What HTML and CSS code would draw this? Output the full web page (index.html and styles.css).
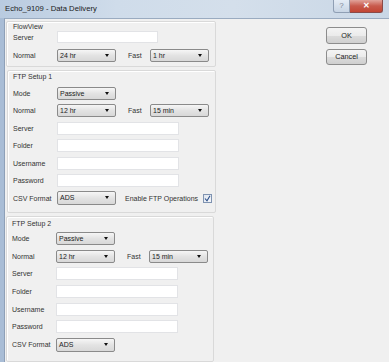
FILE: index.html
```html
<!DOCTYPE html>
<html>
  <head>
    <title>Echo_9109 - Data Delivery</title>
    <link rel="stylesheet" href="styles.css">
  </head>
  <body>
    <div class="dialog">
      <div class="dialog-title">
        <span class="dialog-title-text">Echo_9109 - Data Delivery</span>
        <div class="caption-buttons">
          <div class="caption-help">?</div>
          <div class="caption-close">&#x2715;</div>
        </div>
      </div>
      <div class="dialog-frame">
        <div class="dialog-client">
          <div class="groups">

            <div class="group group-flowview">
              <div class="group-label">FlowView</div>
              <div class="row row-first">
                <span class="row-label">Server</span>
                <div class="textbox textbox-short"></div>
              </div>
              <div class="row row-normal">
                <span class="row-label">Normal</span>
                <div class="combo">24 hr</div>
                <span class="fast-label">Fast</span>
                <div class="combo">1 hr</div>
              </div>
            </div>

            <div class="group group-ftp1">
              <div class="group-label">FTP Setup 1</div>
              <div class="row">
                <span class="row-label">Mode</span>
                <div class="combo">Passive</div>
              </div>
              <div class="row">
                <span class="row-label">Normal</span>
                <div class="combo">12 hr</div>
                <span class="fast-label">Fast</span>
                <div class="combo">15 min</div>
              </div>
              <div class="row">
                <span class="row-label">Server</span>
                <div class="textbox"></div>
              </div>
              <div class="row">
                <span class="row-label">Folder</span>
                <div class="textbox"></div>
              </div>
              <div class="row">
                <span class="row-label">Username</span>
                <div class="textbox"></div>
              </div>
              <div class="row">
                <span class="row-label">Password</span>
                <div class="textbox"></div>
              </div>
              <div class="row">
                <span class="row-label">CSV Format</span>
                <div class="combo combo-tall">ADS</div>
                <span class="enable-label">Enable FTP Operations</span>
                <div class="checkbox">
                  <svg width="7" height="7" viewBox="0 0 7 7"><path d="M1 3.5 L3 5.8 L6 0.8" fill="none" stroke="#2b4f8a" stroke-width="1.1"/></svg>
                </div>
              </div>
            </div>

            <div class="group group-ftp2">
              <div class="group-label">FTP Setup 2</div>
              <div class="row">
                <span class="row-label">Mode</span>
                <div class="combo">Passive</div>
              </div>
              <div class="row">
                <span class="row-label">Normal</span>
                <div class="combo">12 hr</div>
                <span class="fast-label">Fast</span>
                <div class="combo">15 min</div>
              </div>
              <div class="row">
                <span class="row-label">Server</span>
                <div class="textbox"></div>
              </div>
              <div class="row">
                <span class="row-label">Folder</span>
                <div class="textbox"></div>
              </div>
              <div class="row">
                <span class="row-label">Username</span>
                <div class="textbox"></div>
              </div>
              <div class="row">
                <span class="row-label">Password</span>
                <div class="textbox"></div>
              </div>
              <div class="row">
                <span class="row-label">CSV Format</span>
                <div class="combo combo-tall">ADS</div>
              </div>
            </div>

          </div>
          <div class="buttons">
            <div class="push-button">OK</div>
            <div class="push-button push-cancel">Cancel</div>
          </div>
        </div>
      </div>
    </div>
  </body>
</html>
```

FILE: styles.css
```css
body {
  margin: 0;
  font-family: "Liberation Sans", Arial, sans-serif;
  font-size: 7px;
  color: #2a2a2a;
  background: #f0f0f0;
}

.dialog {
  width: 389px;
  height: 362px;
  overflow: hidden;
  display: flex;
  flex-direction: column;
}

.dialog-title {
  height: 18px;
  flex: none;
  display: flex;
  align-items: flex-start;
  justify-content: space-between;
  background: linear-gradient(90deg, #b9cbe0 0%, #cfdcea 30%, #d4dfeb 60%, #c9d7e6 100%);
}

.dialog-title-text {
  font-size: 7.7px;
  color: #1a1a1a;
  padding-left: 5px;
  line-height: 18px;
}

.caption-buttons {
  display: flex;
  margin-right: 6px;
}

.caption-help {
  width: 17px;
  height: 13px;
  box-sizing: border-box;
  border: 1px solid #8f9fb4;
  border-top: none;
  border-radius: 0 0 0 3px;
  background: linear-gradient(#e4ecf5, #c8d5e4);
  color: #7b8796;
  font-size: 8px;
  text-align: center;
  line-height: 12px;
}

.caption-close {
  width: 33px;
  height: 13px;
  box-sizing: border-box;
  border: 1px solid #8a4a48;
  border-top: none;
  border-left: none;
  border-radius: 0 0 3px 0;
  background: linear-gradient(#e1a39a, #c85a4c 50%, #c24534);
  color: #fff;
  font-size: 8px;
  font-weight: bold;
  text-align: center;
  line-height: 12px;
}

.dialog-frame {
  flex: 1;
  display: flex;
  border-left: 4px solid #a9bdd6;
}

.dialog-client {
  flex: 1;
  display: flex;
  border-left: 1px solid #8ea0b8;
  border-top: 1px solid #9aabc0;
  background: #f0f0f0;
}

.groups {
  width: 210px;
  flex: none;
}

.group {
  border: 1px solid #d9d9d9;
  box-shadow: inset 1px 1px 0 #fff;
  border-radius: 2px;
  box-sizing: border-box;
}

.group-flowview {
  margin: 2px 0 0 1px;
  width: 210px;
  height: 46px;
  padding: 0 0 0 6px;
}

.group-ftp1 {
  margin: 3px 0 0 2px;
  width: 209px;
  height: 143px;
  padding: 1px 0 0 5px;
}

.group-ftp2 {
  margin: 3px 0 0 1px;
  width: 208px;
  height: 146px;
  padding: 2px 0 0 5px;
}

.group-label {
  line-height: 10px;
  color: #333;
}

.group-flowview .group-label {
  line-height: 9px;
}

.row {
  display: flex;
  align-items: center;
  height: 13px;
  margin-top: 4.5px;
}

.group-ftp2 .row {
  margin-top: 4.7px;
}

.group-ftp2 .row:nth-child(2) {
  margin-top: 3px;
}

.group .row-first {
  margin-top: 0;
  height: 12px;
}

.group .row-normal {
  margin-top: 6px;
}

.row-label {
  width: 44px;
  flex: none;
  color: #333;
}

.textbox {
  width: 122px;
  height: 13px;
  box-sizing: border-box;
  background: #fff;
  border: 1px solid #e2e3e6;
}

.textbox-short {
  width: 101px;
  height: 12px;
}

.combo {
  position: relative;
  width: 59px;
  height: 13px;
  box-sizing: border-box;
  border: 1px solid #8a8a8a;
  border-radius: 2px;
  background: linear-gradient(#f6f6f6, #e3e3e3 50%, #d8d8d8);
  padding-left: 2px;
  line-height: 11px;
  color: #222;
}

.combo::after {
  content: '';
  position: absolute;
  right: 6px;
  top: 4px;
  border-left: 2.5px solid transparent;
  border-right: 2.5px solid transparent;
  border-top: 3px solid #111;
}

.combo-tall {
  height: 14px;
  line-height: 12px;
}

.fast-label {
  width: 22px;
  margin-left: 12px;
  flex: none;
  color: #333;
}

.enable-label {
  margin-left: 9px;
  width: 78px;
  color: #333;
}

.checkbox {
  width: 9px;
  height: 9px;
  box-sizing: border-box;
  border: 1px solid #7f93b1;
  background: linear-gradient(135deg, #dfe6ef, #f4f6f9);
  display: flex;
  align-items: center;
  justify-content: center;
}

.buttons {
  margin-left: 111px;
  padding-top: 8px;
  display: flex;
  flex-direction: column;
  gap: 5px;
}

.push-button {
  width: 41px;
  height: 17px;
  box-sizing: border-box;
  border: 1px solid #8c8c8c;
  border-radius: 3px;
  background: linear-gradient(#f4f4f4, #ebebeb 50%, #dcdcdc 51%, #cfcfcf);
  text-align: center;
  line-height: 15px;
  font-size: 7.3px;
  color: #222;
}

.push-cancel {
  height: 16px;
  line-height: 14px;
}
```
